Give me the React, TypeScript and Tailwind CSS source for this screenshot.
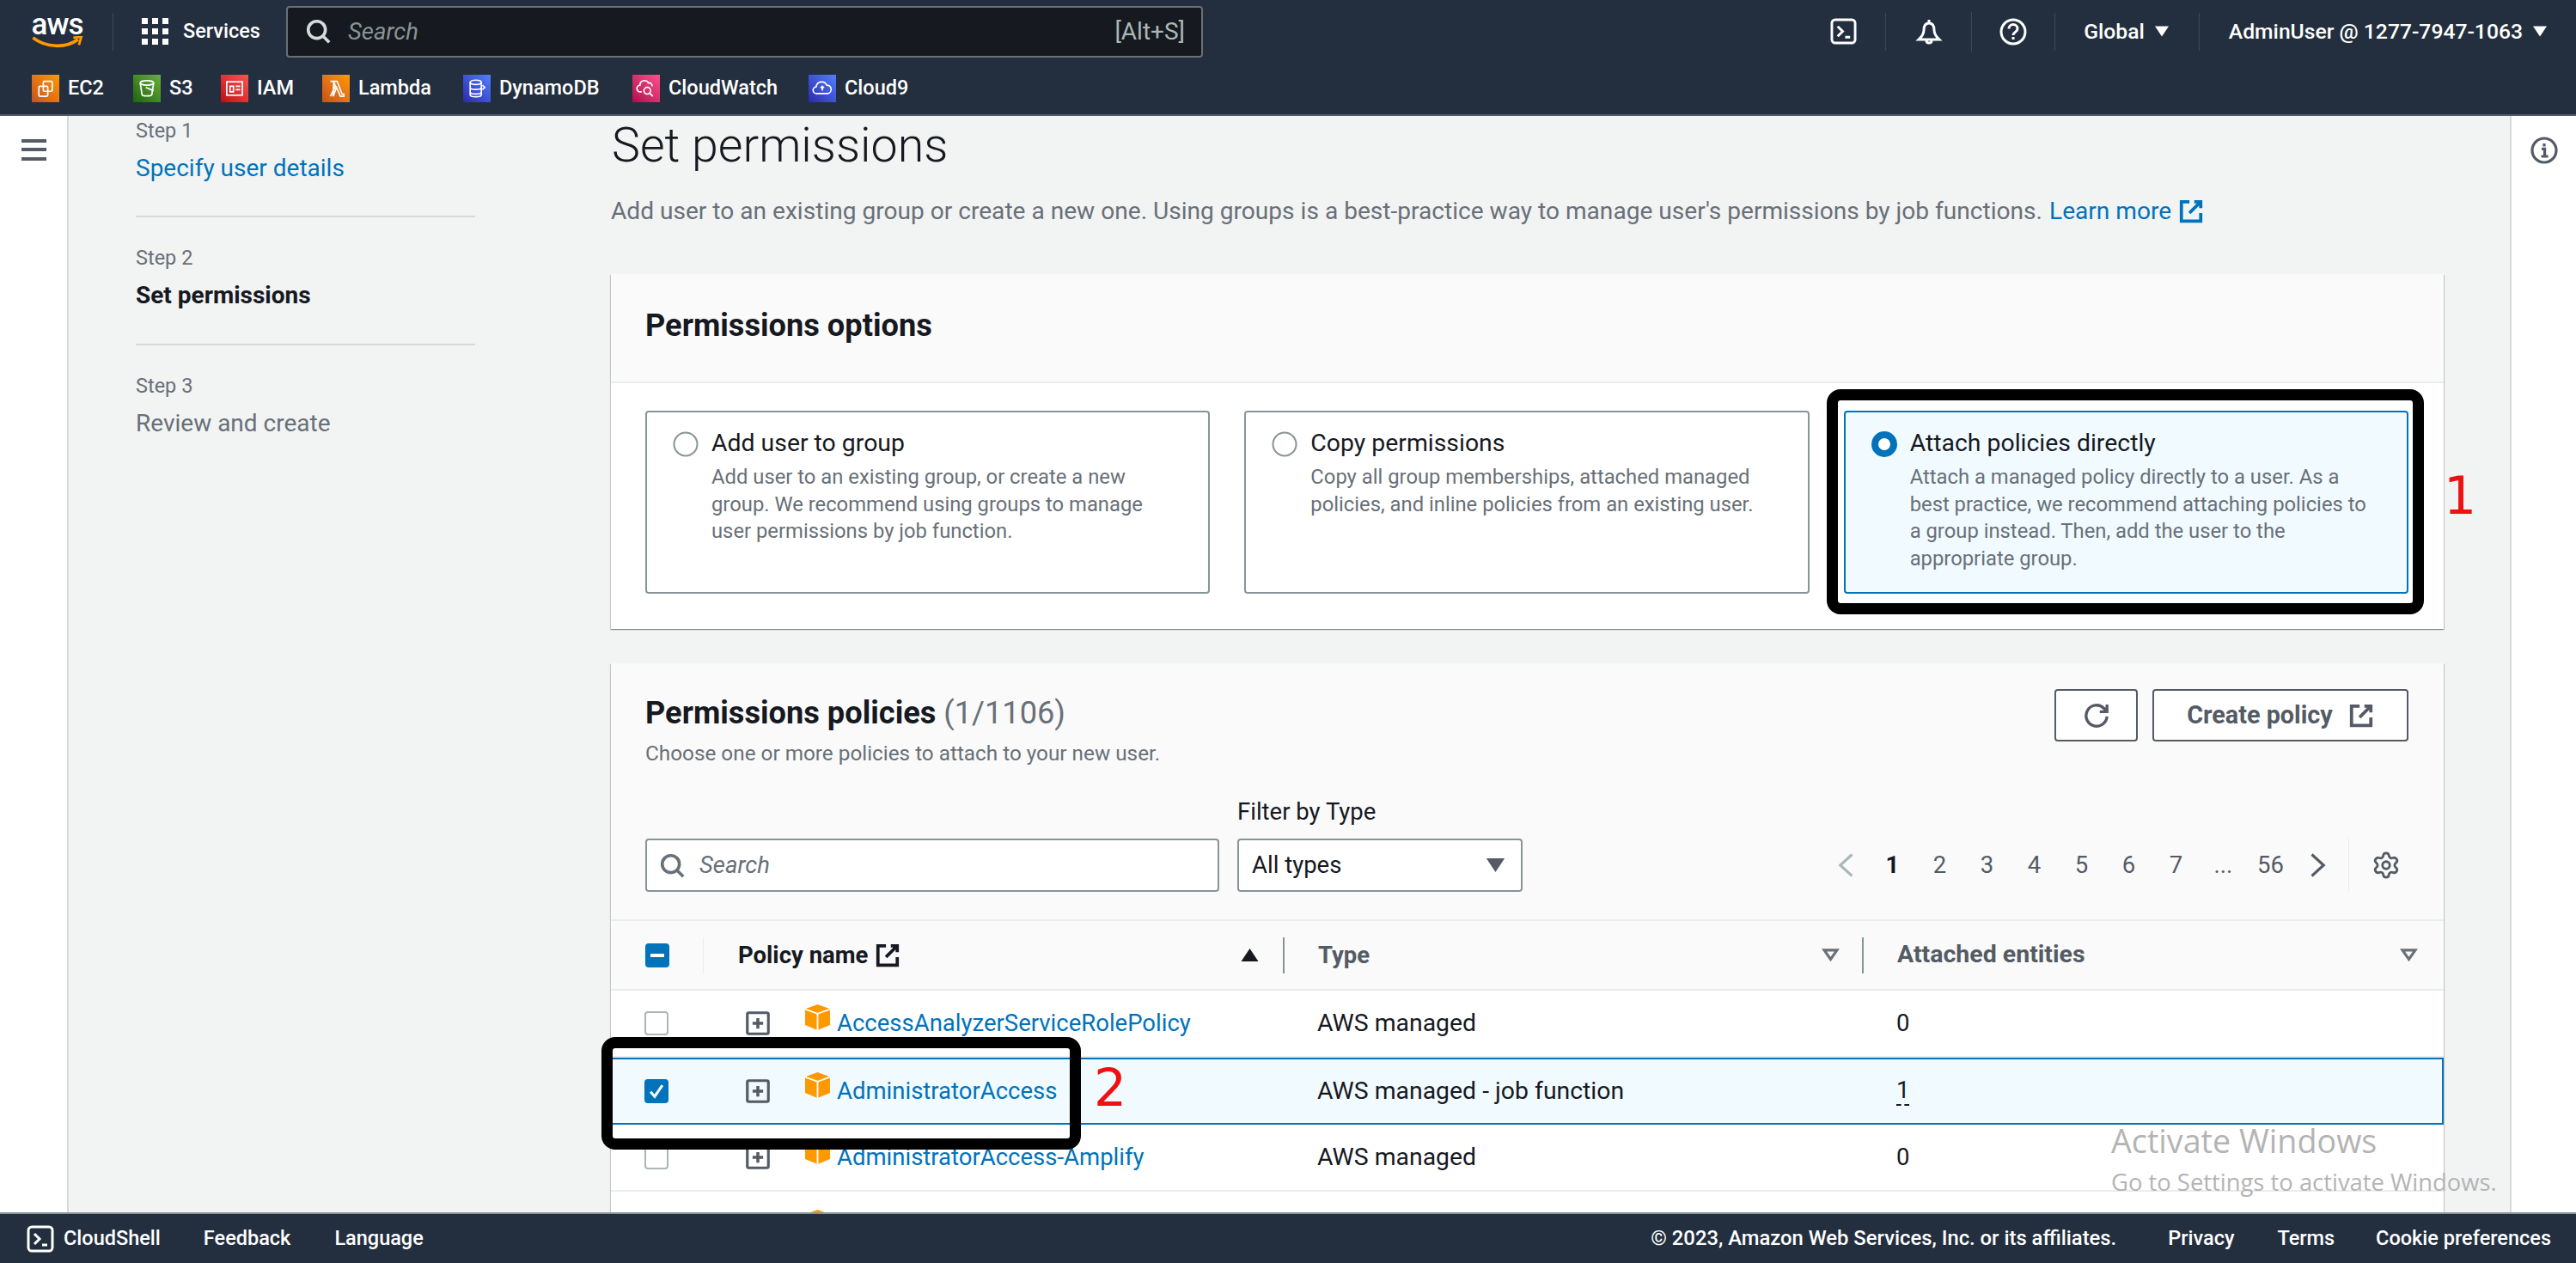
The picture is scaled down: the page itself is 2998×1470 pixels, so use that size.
import { Settings } from 'lucide-react';

const bookmarks = [
  { name: 'EC2', width: 'w-[118px]', tint: 'from-[#c8511b] to-[#ff9900]' },
  { name: 'S3', width: 'w-[102px]', tint: 'from-[#1b660f] to-[#6cae3e]' },
  { name: 'IAM', width: 'w-[118px]', tint: 'from-[#bd0816] to-[#ff5252]' },
  { name: 'Lambda', width: 'w-[164px]', tint: 'from-[#c8511b] to-[#ff9900]' },
  { name: 'DynamoDB', width: 'w-[197px]', tint: 'from-[#2e27ad] to-[#527fff]' },
  { name: 'CloudWatch', width: 'w-[205px]', tint: 'from-[#b0084d] to-[#ff4f8b]' },
  { name: 'Cloud9', width: 'w-[130px]', tint: 'from-[#2e27ad] to-[#527fff]' },
];

const tiles = [
  {
    title: 'Add user to group',
    lines: ['Add user to an existing group, or create a new', 'group. We recommend using groups to manage', 'user permissions by job function.'],
    selected: false,
  },
  {
    title: 'Copy permissions',
    lines: ['Copy all group memberships, attached managed', 'policies, and inline policies from an existing user.'],
    selected: false,
  },
  {
    title: 'Attach policies directly',
    lines: ['Attach a managed policy directly to a user. As a', 'best practice, we recommend attaching policies to', 'a group instead. Then, add the user to the', 'appropriate group.'],
    selected: true,
  },
];

const policies = [
  { name: 'AccessAnalyzerServiceRolePolicy', type: 'AWS managed', count: '0', selected: false },
  { name: 'AdministratorAccess', type: 'AWS managed - job function', count: '1', selected: true },
  { name: 'AdministratorAccess-Amplify', type: 'AWS managed', count: '0', selected: false },
];

function BookmarkGlyph({ name }: { name: string }) {
  const common = { fill: 'none', stroke: 'white', strokeWidth: 1.3 };
  return (
    <svg viewBox="0 0 20 20" className="w-[26px] h-[26px]" {...common}>
      {name === 'EC2' && (
        <>
          <rect x="8" y="3.5" width="8" height="9" rx="1" />
          <rect x="4" y="8" width="8" height="9" rx="1" />
        </>
      )}
      {name === 'S3' && (
        <>
          <ellipse cx="10" cy="5" rx="6" ry="2" />
          <path d="M4 5l1.6 10.5c.2 1.6 8.6 1.6 8.8 0L16 5M9 9l7 3" />
        </>
      )}
      {name === 'IAM' && (
        <>
          <rect x="3" y="4" width="14" height="12" />
          <path d="M6 8h3v5H6zM11 8h4M11 11h4" />
        </>
      )}
      {name === 'Lambda' && <path d="M5 17L9.5 8 8 3.5H5M8 3.5h3L15.5 15H17v2h-3L10.5 9 7.5 17z" />}
      {name === 'DynamoDB' && (
        <>
          <ellipse cx="9" cy="4.5" rx="5" ry="2" />
          <path d="M4 4.500v11c0 2.500 10 2.500 10 0v-11M4 9c0 2.500 10 2.500 10 0M4 13c0 2.500 10 2.500 10 0M15 7l2 2-2 2" />
        </>
      )}
      {name === 'CloudWatch' && (
        <>
          <path d="M6 13H5a3 3 0 0 1-.5-6 4 4 0 0 1 7.500-2 3 3 0 0 1 3.500 3" />
          <circle cx="11" cy="12" r="3" />
          <path d="M13.200 14.200L16 17" />
        </>
      )}
      {name === 'Cloud9' && (
        <>
          <path d="M6 14.500H5a3 3 0 0 1-.5-6 5 5 0 0 1 9.500-1.500 3.800 3.800 0 0 1 1 7.500H6z" />
          <path d="M10 12V8M8.500 9.500L10 8l1.500 1.500" />
        </>
      )}
    </svg>
  );
}

function ShellIcon({ className }: { className: string }) {
  return (
    <svg viewBox="0 0 16 16" className={className} fill="none" stroke="white" strokeWidth="1.500">
      <rect x="1" y="1" width="14" height="14" rx="2" />
      <path d="M4.500 5l3 3-3 3M9 11.500h3" />
    </svg>
  );
}

function ExternalIcon({ className, color }: { className: string; color: string }) {
  return (
    <svg viewBox="0 0 16 16" className={className} fill="none" stroke={color} strokeWidth="2">
      <path d="M7 2H2v12h12V9M10 2h4v4M14 2L7 9" />
    </svg>
  );
}

function SearchIcon({ className, color }: { className: string; color: string }) {
  return (
    <svg viewBox="0 0 16 16" className={className} fill="none" stroke={color} strokeWidth="2">
      <circle cx="7" cy="7" r="5.500" />
      <path d="M11 11l4 4" />
    </svg>
  );
}

function Triangle({ className, up = false }: { className: string; up?: boolean }) {
  return (
    <svg viewBox="0 0 16 12" className={className} fill="currentColor">
      <path d={up ? 'M8 0l8 12H0z' : 'M0 0h16L8 12z'} />
    </svg>
  );
}

function SortDown() {
  return (
    <svg viewBox="0 0 16 12" className="w-[21px] h-[15px]" fill="none" stroke="#687078" strokeWidth="2.500">
      <path d="M2 1.500h12L8 10z" />
    </svg>
  );
}

function Divider({ className }: { className: string }) {
  return <div className={`w-px shrink-0 ${className}`} />;
}

function Cube() {
  return (
    <svg viewBox="1 0 14 16" preserveAspectRatio="none" className="w-[29px] h-[30px] mb-[14px] shrink-0">
      <path d="M8 0l7 2.800v10L8 16 1 12.800v-10z" fill="#ff9900" />
      <path d="M1 3l7 2.800L15 3M8 5.800V16" fill="none" stroke="white" strokeWidth="0.900" />
    </svg>
  );
}

function ExpandIcon() {
  return (
    <svg viewBox="0 0 16 16" className="w-[28px] h-[28px]" fill="none" stroke="#545b64" strokeWidth="1.800">
      <rect x="1" y="1" width="14" height="14" rx="1" />
      <path d="M8 4.500v7M4.500 8h7" strokeWidth="2" />
    </svg>
  );
}

function Radio({ selected }: { selected: boolean }) {
  return (
    <svg viewBox="0 0 30 30" className="w-[30px] h-[30px] shrink-0 mt-[5px]" fill="white" stroke={selected ? '#0073bb' : '#879596'}>
      {selected ? <circle cx="15" cy="15" r="11" strokeWidth="8" /> : <circle cx="15" cy="15" r="13.500" strokeWidth="2" />}
    </svg>
  );
}

function Tile({ title, lines, selected }: { title: string; lines: string[]; selected: boolean }) {
  return (
    <div className={`flex-1 h-[213px] rounded-[4px] border-2 pl-[30px] pt-[17px] flex gap-[15px] ${selected ? 'border-[#0073bb] bg-[#f1faff]' : 'border-[#879596] bg-white'}`}>
      <Radio selected={selected} />
      <div>
        <div className="text-[28.400px] leading-[38px] text-[#16191f]">{title}</div>
        <div className="text-[23.800px] leading-[31.500px] text-[#687078] mt-[5px]">
          {lines.map((line) => (
            <div key={line}>{line}</div>
          ))}
        </div>
      </div>
    </div>
  );
}

function PolicyRow({ name, type, count, selected }: { name: string; type: string; count: string; selected: boolean }) {
  return (
    <div className={`h-[78px] flex items-center text-[27.500px] ${selected ? 'pl-[37px] bg-[#f1faff] border-2 border-[#0073bb]' : 'pl-[39px] bg-white border-b-2 border-[#eaeded]'}`}>
      <div className="w-[118px]">
        {selected ? (
          <div className="w-[28px] h-[28px] rounded-[4px] bg-[#0073bb] flex items-center justify-center">
            <svg viewBox="0 0 16 16" className="w-[22px] h-[22px]" fill="none" stroke="white" strokeWidth="2.200">
              <path d="M3 8.500l3.500 4L13 3" />
            </svg>
          </div>
        ) : (
          <div className="w-[28px] h-[28px] rounded-[4px] bg-white border-2 border-[#aab7b8]" />
        )}
      </div>
      <div className="w-[69px]">
        <ExpandIcon />
      </div>
      <Cube />
      <div className="w-[567px] pl-[8px] text-[#0073bb]">{name}</div>
      <div className="w-[674px] text-[28.400px] text-[#16191f]">{type}</div>
      <div className={`text-[#16191f] ${selected ? 'border-b-2 border-dashed border-[#16191f] leading-[32px]' : ''}`}>{count}</div>
    </div>
  );
}

function Step({ step, name, tone }: { step: string; name: string; tone: string }) {
  return (
    <div>
      <div className="text-[23.500px] leading-[32px] text-[#687078]">{step}</div>
      <div className={`text-[28px] leading-[44px] mt-[6px] ${tone}`}>{name}</div>
    </div>
  );
}

export default function App() {
  return (
    <div className="relative w-[2998px] h-[1470px] overflow-hidden flex flex-col font-[Roboto,sans-serif] bg-white">
      {/* Top navigation */}
      <header className="h-[135px] bg-[#232f3e] border-b-2 border-[#545b64] text-white shrink-0">
        <div className="h-[73px] flex items-center pl-[35px] pr-[34px]">
          <div className="w-[63px] flex flex-col items-center">
            <span className="text-[35px] leading-[26px] font-medium tracking-[-1px]">aws</span>
            <svg viewBox="0 0 64 16" className="w-[63px] h-[15px]" fill="none">
              <path d="M2 2c16 13 42 13 56 2" stroke="#ff9900" strokeWidth="4" />
              <path d="M52 2l10-1-3 10" stroke="#ff9900" strokeWidth="3" />
            </svg>
          </div>
          <Divider className="h-[44px] bg-[#414750] ml-[33px]" />
          <svg viewBox="0 0 31 31" className="w-[31px] h-[31px] ml-[33px]" fill="white">
            {[0, 12, 24].map((y) =>
              [0, 12, 24].map((x) => <rect key={`${x}-${y}`} x={x} y={y} width="7" height="7" />),
            )}
          </svg>
          <span className="text-[23.500px] font-medium w-[137px] pl-[17px]">Services</span>
          <div className="w-[1067px] h-[60px] rounded-[4px] bg-[#16191f] border-2 border-[#687078] flex items-center pl-[21px] pr-[19px]">
            <SearchIcon className="w-[29px] h-[29px]" color="#d5dbdb" />
            <span className="ml-[20px] text-[27.500px] italic text-[#879596]">Search</span>
            <span className="ml-auto text-[28px] text-[#aab7b8]">[Alt+S]</span>
          </div>
          <div className="ml-auto flex items-center">
            <ShellIcon className="w-[31px] h-[31px]" />
            <Divider className="h-[44px] bg-[#414750] ml-[33px]" />
            <svg viewBox="0 0 16 16" className="w-[32px] h-[32px] ml-[34px]" fill="none" stroke="white" strokeWidth="1.500">
              <path d="M8 1v2M8 3c-2.500 0-3 2-3 4 0 3-2.500 5-3 5.500h12c-.5-.5-3-2.500-3-5.500 0-2-.5-4-3-4zM6.500 13c0 2 3 2 3 0" />
            </svg>
            <Divider className="h-[46px] bg-[#414750] ml-[33px]" />
            <svg viewBox="0 0 16 16" className="w-[32px] h-[32px] ml-[32px]" fill="none" stroke="white" strokeWidth="1.500">
              <circle cx="8" cy="8" r="7" />
              <path d="M5.500 6.200c0-3.200 5-3.200 5 0 0 2-2.500 2-2.500 3.800M8 11v1.500" />
            </svg>
            <Divider className="h-[44px] bg-[#414750] ml-[32px]" />
            <span className="ml-[33px] text-[24.700px] font-medium">Global</span>
            <Triangle className="w-[16px] h-[13px] ml-[12px] text-white" />
            <Divider className="h-[44px] bg-[#414750] ml-[35px]" />
            <span className="ml-[34px] text-[24.700px] font-medium">AdminUser @ 1277-7947-1063</span>
            <Triangle className="w-[16px] h-[13px] ml-[12px] text-white" />
          </div>
        </div>
        <div className="flex items-center pl-[37px] h-[60px]">
          {bookmarks.map((item) => (
            <div key={item.name} className={`flex items-center ${item.width}`}>
              <div className={`w-[32px] h-[32px] flex items-center justify-center bg-linear-to-tr ${item.tint}`}>
                <BookmarkGlyph name={item.name} />
              </div>
              <span className="ml-[10px] text-[23.500px] font-medium">{item.name}</span>
            </div>
          ))}
        </div>
      </header>

      <div className="flex-1 flex min-h-0">
        {/* Left rail */}
        <div className="w-[80px] shrink-0 bg-white border-r-2 border-[#d5dbdb] pt-[27px] pl-[25px]">
          <svg viewBox="0 0 29 25" className="w-[29px] h-[25px]" fill="#545b64">
            <rect y="0" width="29" height="4" />
            <rect y="10" width="29" height="4" />
            <rect y="21" width="29" height="4" />
          </svg>
        </div>

        {/* Content */}
        <div className="flex-1 min-w-0 flex bg-[#f2f3f3] overflow-hidden">
          <nav className="w-[631px] shrink-0 pl-[78px]">
            <div className="w-[395px] pt-[1px]">
              <Step step="Step 1" name="Specify user details" tone="text-[#0073bb]" />
              <div className="h-[2px] bg-[#d5dbdb] mt-[33px] mb-[31px]" />
              <Step step="Step 2" name="Set permissions" tone="text-[#16191f] font-bold" />
              <div className="h-[2px] bg-[#d5dbdb] mt-[34px] mb-[31px]" />
              <Step step="Step 3" name="Review and create" tone="text-[#687078]" />
            </div>
          </nav>

          <main className="w-[2133px] shrink-0">
            <h1 className="text-[55.500px] leading-[70px] font-light text-[#16191f] pl-[1px]">Set permissions</h1>
            <div className="flex items-center text-[28.100px] leading-[44px] mt-[19px] text-[#687078]">
              <span>Add user to an existing group or create a new one. Using groups is a best-practice way to manage user's permissions by job functions.</span>
              <span className="ml-[8px] text-[#0073bb]">Learn more</span>
              <ExternalIcon className="w-[30px] h-[30px] ml-[8px]" color="#0073bb" />
            </div>

            {/* Permissions options */}
            <section className="mt-[51px] bg-white shadow-[0_1px_1px_0_rgba(0,28,36,0.3),1px_1px_1px_0_rgba(0,28,36,0.15),-1px_1px_1px_0_rgba(0,28,36,0.15)]">
              <div className="h-[127px] bg-[#fafafa] border-b-2 border-[#eaeded] pl-[40px] flex items-center">
                <h2 className="text-[36.200px] font-bold text-[#16191f] mt-[-4px]">Permissions options</h2>
              </div>
              <div className="flex gap-[40px] pl-[40px] pr-[41px] pt-[32px] pb-[41px]">
                {tiles.map((tile) => (
                  <Tile key={tile.title} {...tile} />
                ))}
              </div>
            </section>

            {/* Permissions policies */}
            <section className="mt-[40px] bg-white shadow-[0_1px_1px_0_rgba(0,28,36,0.3),1px_1px_1px_0_rgba(0,28,36,0.15),-1px_1px_1px_0_rgba(0,28,36,0.15)]">
              <div className="bg-[#fafafa] border-b-2 border-[#eaeded] h-[300px] px-[40px] pt-[30px]">
                <div className="flex justify-between items-start">
                  <div className="pt-[5px]">
                    <h2 className="text-[36.200px] leading-[46px] font-bold text-[#16191f]">
                      Permissions policies <span className="font-normal text-[#687078]">(1/1106)</span>
                    </h2>
                    <p className="text-[24.300px] leading-[32px] mt-[8px] text-[#687078]">Choose one or more policies to attach to your new user.</p>
                  </div>
                  <div className="flex gap-[17px] pr-[1px]">
                    <div className="w-[97px] h-[61px] rounded-[4px] bg-white border-2 border-[#545b64] flex items-center justify-center">
                      <svg viewBox="0 0 16 16" className="w-[30px] h-[30px]" fill="none" stroke="#545b64" strokeWidth="1.800">
                        <path d="M14.500 8.500a6.500 6.500 0 1 1-2-5.200l2 2M14.500 1v4.500H10" />
                      </svg>
                    </div>
                    <div className="w-[298px] h-[61px] rounded-[4px] bg-white border-2 border-[#545b64] flex items-center justify-center gap-[18px] text-[28.800px] font-bold text-[#545b64]">
                      <span>Create policy</span>
                      <ExternalIcon className="w-[30px] h-[30px]" color="#545b64" />
                    </div>
                  </div>
                </div>

                <div className="flex items-end mt-[30px] pr-[10px]">
                  <div className="w-[668px] h-[62px] rounded-[4px] bg-white border-2 border-[#879596] flex items-center pl-[15px]">
                    <SearchIcon className="w-[29px] h-[29px]" color="#687078" />
                    <span className="ml-[17px] text-[27.500px] italic text-[#687078]">Search</span>
                  </div>
                  <div className="ml-[21px] w-[332px]">
                    <div className="text-[27.500px] leading-[44px] mb-[9px] text-[#16191f]">Filter by Type</div>
                    <div className="h-[62px] rounded-[4px] bg-white border-2 border-[#879596] flex items-center pl-[15px] pr-[18px] text-[27.500px] text-[#16191f]">
                      <span>All types</span>
                      <Triangle className="w-[23px] h-[16px] ml-auto text-[#545b64]" />
                    </div>
                  </div>
                  <div className="ml-auto flex items-center h-[62px] text-[27.500px] text-[#545b64]">
                    <div className="w-[55px] flex justify-center">
                      <svg viewBox="0 0 16 24" className="w-[20px] h-[32px]" fill="none" stroke="#aab7b8" strokeWidth="2.500">
                        <path d="M14 2L3 12l11 10" />
                      </svg>
                    </div>
                    <div className="w-[55px] text-center font-bold text-[#16191f]">1</div>
                    {['2', '3', '4', '5', '6', '7', '...', '56'].map((page) => (
                      <div key={page} className="w-[55px] text-center">
                        {page}
                      </div>
                    ))}
                    <div className="w-[55px] flex justify-center">
                      <svg viewBox="0 0 16 24" className="w-[20px] h-[32px]" fill="none" stroke="#545b64" strokeWidth="2.500">
                        <path d="M2 2l11 10L2 22" />
                      </svg>
                    </div>
                    <Divider className="h-[62px] bg-[#eaeded] ml-[8px]" />
                    <Settings className="w-[34px] h-[34px] ml-[26px] text-[#545b64]" strokeWidth={2} />
                  </div>
                </div>
              </div>

              <div className="h-[81px] bg-[#fafafa] border-b-2 border-[#eaeded] flex items-center pl-[40px] text-[27.500px] font-bold">
                <div className="w-[67px] flex">
                  <div className="w-[28px] h-[28px] rounded-[4px] bg-[#0073bb] flex items-center justify-center">
                    <div className="w-[16px] h-[4px] bg-white" />
                  </div>
                </div>
                <Divider className="h-[42px] bg-[#eaeded]" />
                <div className="w-[676px] h-[42px] pl-[40px] pr-[28px] border-r-2 border-[#879596] flex items-center text-[#16191f]">
                  <span>Policy name</span>
                  <ExternalIcon className="w-[30px] h-[30px] ml-[8px]" color="#16191f" />
                  <Triangle up className="w-[21px] h-[15px] ml-auto text-[#16191f]" />
                </div>
                <div className="w-[674px] h-[42px] pl-[39px] pr-[26px] border-r-2 border-[#879596] flex items-center text-[#545b64]">
                  <span>Type</span>
                  <span className="ml-auto flex">
                    <SortDown />
                  </span>
                </div>
                <div className="flex-1 h-[42px] pl-[39px] pr-[30px] flex items-center text-[28.500px] text-[#545b64]">
                  <span>Attached entities</span>
                  <span className="ml-auto flex">
                    <SortDown />
                  </span>
                </div>
              </div>

              {policies.map((policy) => (
                <PolicyRow key={policy.name} {...policy} />
              ))}
              <div className="h-[78px] bg-white pl-[226px] pt-[21px]">
                <Cube />
              </div>
            </section>
          </main>
        </div>

        {/* Right rail */}
        <div className="w-[77px] shrink-0 bg-white border-l-2 border-[#d5dbdb] pt-[24px] pl-[22px]">
          <svg viewBox="0 0 16 16" className="w-[32px] h-[32px]" fill="none" stroke="#545b64" strokeWidth="1.600">
            <circle cx="8" cy="8" r="7" />
            <path d="M6.500 7.200H8.300V11.500M6.300 11.500h4M8 4v1.800" />
          </svg>
        </div>
      </div>

      {/* Footer */}
      <footer className="h-[59px] shrink-0 bg-[#232f3e] border-t-2 border-[#879596] text-white text-[23.500px] font-medium flex items-center pl-[31px] pr-[29px]">
        <ShellIcon className="w-[32px] h-[32px]" />
        <span className="ml-[11px]">CloudShell</span>
        <span className="ml-[50px]">Feedback</span>
        <span className="ml-[51px]">Language</span>
        <span className="ml-auto text-[23.800px]">© 2023, Amazon Web Services, Inc. or its affiliates.</span>
        <span className="ml-[60px]">Privacy</span>
        <span className="ml-[50px]">Terms</span>
        <span className="ml-[48px]">Cookie preferences</span>
      </footer>

      {/* Annotations */}
      <div className="absolute left-[2126px] top-[453px] w-[695px] h-[262px] border-[13px] border-black rounded-[16px]" />
      <div className="absolute left-[700px] top-[1207px] w-[558px] h-[131px] border-[13px] border-black rounded-[16px]" />
      <span className="absolute left-[2844px] top-[542px] text-[60px] leading-[70px] text-[#ee1111] font-['DejaVu_Sans',sans-serif]">1</span>
      <span className="absolute left-[1273px] top-[1231px] text-[60px] leading-[70px] text-[#ee1111] font-['DejaVu_Sans',sans-serif]">2</span>
      <div className="absolute left-[2457px] top-[1305px] font-['Open_Sans',sans-serif] text-[#b4b4b4]">
        <div className="text-[37.700px] leading-[46px]">Activate Windows</div>
        <div className="text-[27.400px] leading-[34px] mt-[8px] whitespace-nowrap">Go to Settings to activate Windows.</div>
      </div>
    </div>
  );
}
